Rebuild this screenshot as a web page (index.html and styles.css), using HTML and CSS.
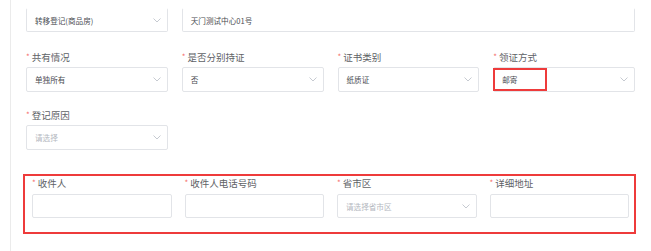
FILE: index.html
```html
<!DOCTYPE html>
<html lang="zh-CN">
<head>
    <meta charset="UTF-8">
    <meta name="viewport" content="width=device-width, initial-scale=1.0">
    <title>登记信息</title>
    <link rel="stylesheet" href="styles.css">
</head>
<body>
    <div class="page">
        <div class="form-grid">
            <div class="field first">
                <div class="control select">
                    <span class="value">转移登记(商品房)</span>
                    <svg class="arrow" width="8" height="5" viewBox="0 0 8 5"><path d="M0.5 0.5 L4 4 L7.5 0.5" fill="none" stroke="#c0c4cc" stroke-width="0.9"/></svg>
                </div>
            </div>
            <div class="field first span-3">
                <div class="control">
                    <span class="value">天门测试中心01号</span>
                </div>
            </div>

            <div class="field">
                <label class="label"><span class="req">*</span>共有情况</label>
                <div class="control select">
                    <span class="value">单独所有</span>
                    <svg class="arrow" width="8" height="5" viewBox="0 0 8 5"><path d="M0.5 0.5 L4 4 L7.5 0.5" fill="none" stroke="#c0c4cc" stroke-width="0.9"/></svg>
                </div>
            </div>
            <div class="field">
                <label class="label"><span class="req">*</span>是否分别持证</label>
                <div class="control select">
                    <span class="value">否</span>
                    <svg class="arrow" width="8" height="5" viewBox="0 0 8 5"><path d="M0.5 0.5 L4 4 L7.5 0.5" fill="none" stroke="#c0c4cc" stroke-width="0.9"/></svg>
                </div>
            </div>
            <div class="field">
                <label class="label"><span class="req">*</span>证书类别</label>
                <div class="control select">
                    <span class="value">纸质证</span>
                    <svg class="arrow" width="8" height="5" viewBox="0 0 8 5"><path d="M0.5 0.5 L4 4 L7.5 0.5" fill="none" stroke="#c0c4cc" stroke-width="0.9"/></svg>
                </div>
            </div>
            <div class="field">
                <label class="label"><span class="req">*</span>领证方式</label>
                <div class="control select">
                    <span class="value">邮寄</span>
                    <svg class="arrow" width="8" height="5" viewBox="0 0 8 5"><path d="M0.5 0.5 L4 4 L7.5 0.5" fill="none" stroke="#c0c4cc" stroke-width="0.9"/></svg>
                    <div class="mark"></div>
                </div>
            </div>

            <div class="field">
                <label class="label"><span class="req">*</span>登记原因</label>
                <div class="control select">
                    <span class="value placeholder">请选择</span>
                    <svg class="arrow" width="8" height="5" viewBox="0 0 8 5"><path d="M0.5 0.5 L4 4 L7.5 0.5" fill="none" stroke="#c0c4cc" stroke-width="0.9"/></svg>
                </div>
            </div>
        </div>

        <div class="receiver">
            <div class="form-grid tight">
                <div class="field">
                    <label class="label"><span class="req">*</span>收件人</label>
                    <div class="control short"></div>
                </div>
                <div class="field">
                    <label class="label"><span class="req">*</span>收件人电话号码</label>
                    <div class="control short"></div>
                </div>
                <div class="field">
                    <label class="label"><span class="req">*</span>省市区</label>
                    <div class="control select short">
                        <span class="value placeholder">请选择省市区</span>
                        <svg class="arrow" width="8" height="5" viewBox="0 0 8 5"><path d="M0.5 0.5 L4 4 L7.5 0.5" fill="none" stroke="#c0c4cc" stroke-width="0.9"/></svg>
                    </div>
                </div>
                <div class="field">
                    <label class="label"><span class="req">*</span>详细地址</label>
                    <div class="control short"></div>
                </div>
            </div>
        </div>
    </div>
</body>
</html>
```

FILE: styles.css
```css
body {
    margin: 0;
    background: #fff;
    font-family: "Noto Sans CJK SC", "Noto Sans", sans-serif;
}
.page {
    margin-left: 10px;
    border-left: 1px solid #ebebeb;
    min-height: 251px;
    box-sizing: border-box;
    padding: 8px 16px 0 15px;
}
.form-grid {
    display: grid;
    grid-template-columns: repeat(4, 1fr);
    column-gap: 14px;
    row-gap: 16px;
}
.field.first {
    margin-bottom: 2px;
}
.span-3 {
    grid-column: span 3;
}
.label {
    display: block;
    height: 14px;
    line-height: 14px;
    margin-bottom: 3px;
    font-size: 9.5px;
    color: #606266;
    white-space: nowrap;
}
.req {
    color: #f56c6c;
    font-size: 8px;
    margin-right: 2px;
    vertical-align: 1px;
}
.control {
    position: relative;
    display: flex;
    align-items: center;
    height: 25px;
    box-sizing: border-box;
    padding: 0 6px 0 8px;
    border: 1px solid #e2e4e8;
    border-radius: 2px;
    background: #fff;
}
.field.first .control {
    height: 24px;
    border-top-color: transparent;
}
.control.short {
    height: 24px;
}
.value {
    flex: 1;
    font-size: 7.6px;
    color: #4a4c52;
    white-space: nowrap;
}
.value.placeholder {
    color: #b4b8c0;
}
.arrow {
    flex: none;
}
.mark {
    position: absolute;
    left: -1px;
    top: 0;
    width: 54px;
    height: 23px;
    box-sizing: border-box;
    border: 2px solid #ee3b3b;
}
.receiver {
    margin: 24px -1px 0 -3px;
    border: 2px solid #ee3b3b;
    padding: 0 5px 14px 7px;
}
.form-grid.tight {
    column-gap: 13px;
}
.form-grid.tight .label {
    margin-bottom: 4px;
}
```
